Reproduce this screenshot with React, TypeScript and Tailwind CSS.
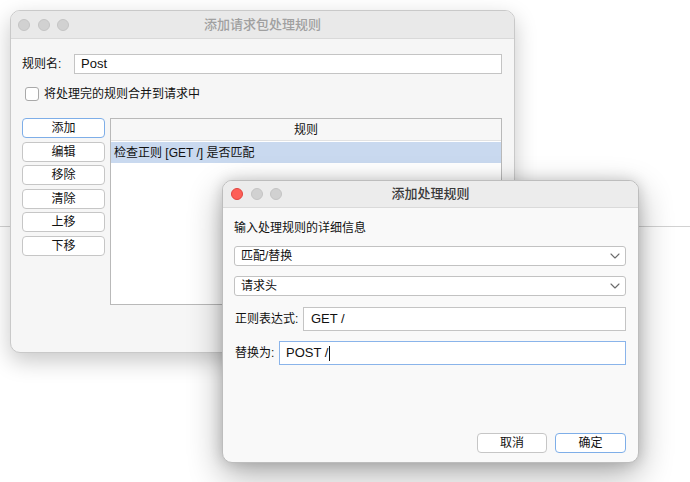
import React from "react";

const FONT = { fontFamily: '"Liberation Sans", "Noto Sans CJK SC", sans-serif' };

const Lights = ({ active }: { active?: boolean }) => (
  <div className="flex items-center gap-[7.5px]">
    <span className={`w-[12px] h-[12px] rounded-full ${active ? "bg-[#fe5f57] border border-[#e0443e]" : "bg-[#d1d1d1] border border-[#c4c4c4]"}`} />
    <span className="w-[12px] h-[12px] rounded-full bg-[#d1d1d1] border border-[#c4c4c4]" />
    <span className="w-[12px] h-[12px] rounded-full bg-[#d1d1d1] border border-[#c4c4c4]" />
  </div>
);

const Chevron = () => (
  <svg width="10" height="6" viewBox="0 0 10 6" className="mr-[5px]">
    <polyline points="1,1 5,5 9,1" fill="none" stroke="#6b6b6b" strokeWidth="1.1" strokeLinecap="round" strokeLinejoin="round" />
  </svg>
);

const SideBtn = ({ label, focus }: { label: string; focus?: boolean }) => (
  <div
    className={`h-[20px] w-[83px] rounded-[4px] bg-white flex items-center justify-center text-[12px] text-[#111] ${
      focus ? "border border-[#7eaee8]" : "border border-[#c6c6c6]"
    }`}
  >
    {label}
  </div>
);

const Select = ({ label }: { label: string }) => (
  <div className="h-[20px] rounded-[3px] bg-white border border-[#c2c2c2] flex items-center justify-between pl-[6px] text-[12px] text-[#111]">
    <span>{label}</span>
    <Chevron />
  </div>
);

export default function App() {
  return (
    <div className="relative w-[690px] h-[482px] bg-white overflow-hidden" style={FONT}>
      {/* desktop line behind the windows */}
      <div className="mt-[226px] h-px bg-[#d2d2d2]" />

      {/* Back window */}
      <div className="absolute left-[10px] top-[10px] w-[505px] h-[343px] rounded-[10px] bg-[#f6f6f6] border border-[#c9c9c9] shadow-[0_8px_22px_rgba(0,0,0,0.22)] overflow-hidden flex flex-col">
        <div className="relative h-[28px] bg-[#e9e9e9] border-b border-[#d9d9d9] flex items-center pl-[7px]">
          <Lights />
          <div className="absolute inset-0 flex items-center justify-center text-[13px] font-medium text-[#a0a0a0]">
            添加请求包处理规则
          </div>
        </div>
        <div className="flex flex-col pl-[11px] pr-[12px] pt-[15px]">
          <div className="flex items-center h-[20px]">
            <span className="text-[12px] text-[#111] w-[52px]">规则名:</span>
            <div className="flex-1 h-[20px] bg-white border border-[#c4c4c4] flex items-center pl-[6px] text-[13px] text-[#111]">
              Post
            </div>
          </div>
          <div className="flex items-center gap-[5px] mt-[12px] ml-[3px] h-[15px]">
            <span className="w-[14px] h-[14px] rounded-[3px] bg-white border border-[#a9a9a9]" />
            <span className="text-[12px] text-[#111]">将处理完的规则合并到请求中</span>
          </div>
          <div className="flex gap-[5px] mt-[17px]">
            <div className="flex flex-col gap-[3.6px]">
              <SideBtn label="添加" focus />
              <SideBtn label="编辑" />
              <SideBtn label="移除" />
              <SideBtn label="清除" />
              <SideBtn label="上移" />
              <SideBtn label="下移" />
            </div>
            <div className="flex-1 h-[187px] bg-white border border-[#b9b9b9] flex flex-col">
              <div className="h-[22px] bg-[#f7f7f7] border-b border-[#e2e2e2] flex items-center justify-center text-[12px] text-[#111]">
                规则
              </div>
              <div className="h-[21px] mt-[1px] bg-[#c9d9ef] flex items-center pl-[3px] text-[12px] text-[#111]">
                检查正则 [GET /] 是否匹配
              </div>
            </div>
          </div>
        </div>
      </div>

      {/* Front window */}
      <div className="absolute left-[222px] top-[180px] w-[417px] h-[283px] rounded-[10px] bg-[#f9f9f9] border border-[#bdbdbd] shadow-[0_12px_34px_rgba(0,0,0,0.32),0_0_14px_rgba(0,0,0,0.16)] overflow-hidden flex flex-col">
        <div className="relative h-[27px] bg-[#ececec] border-b border-[#dadada] flex items-center pl-[8px]">
          <Lights active />
          <div className="absolute inset-0 flex items-center justify-center text-[13px] font-medium text-[#3a3a3a]">
            添加处理规则
          </div>
        </div>
        <div className="flex flex-col pl-[11px] pr-[12px] pt-[12px]">
          <div className="text-[12px] text-[#111] h-[16px] leading-[16px]">输入处理规则的详细信息</div>
          <div className="mt-[10px]">
            <Select label="匹配/替换" />
          </div>
          <div className="mt-[10px]">
            <Select label="请求头" />
          </div>
          <div className="flex items-center mt-[11px]">
            <span className="text-[12px] text-[#111] w-[69px] pl-[1px]">正则表达式:</span>
            <div className="flex-1 h-[24px] bg-white border border-[#c4c4c4] flex items-center pl-[7px] text-[13px] text-[#111]">
              GET /
            </div>
          </div>
          <div className="flex items-center mt-[10px]">
            <span className="text-[12px] text-[#111] w-[45px] pl-[1px]">替换为:</span>
            <div className="flex-1 h-[24px] bg-white border-[1.5px] border-[#8ab4ea] flex items-center pl-[6px] text-[13px] text-[#111]">
              POST /<span className="ml-[1px] w-px h-[15px] bg-[#111]" />
            </div>
          </div>
          <div className="flex justify-end gap-[8px] mt-[68px]">
            <div className="w-[70px] h-[20px] rounded-[4px] bg-white border border-[#c6c6c6] flex items-center justify-center text-[12px] text-[#111]">
              取消
            </div>
            <div className="w-[71px] h-[20px] rounded-[4px] bg-white border border-[#7eaee8] flex items-center justify-center text-[12px] text-[#111]">
              确定
            </div>
          </div>
        </div>
      </div>
    </div>
  );
}
